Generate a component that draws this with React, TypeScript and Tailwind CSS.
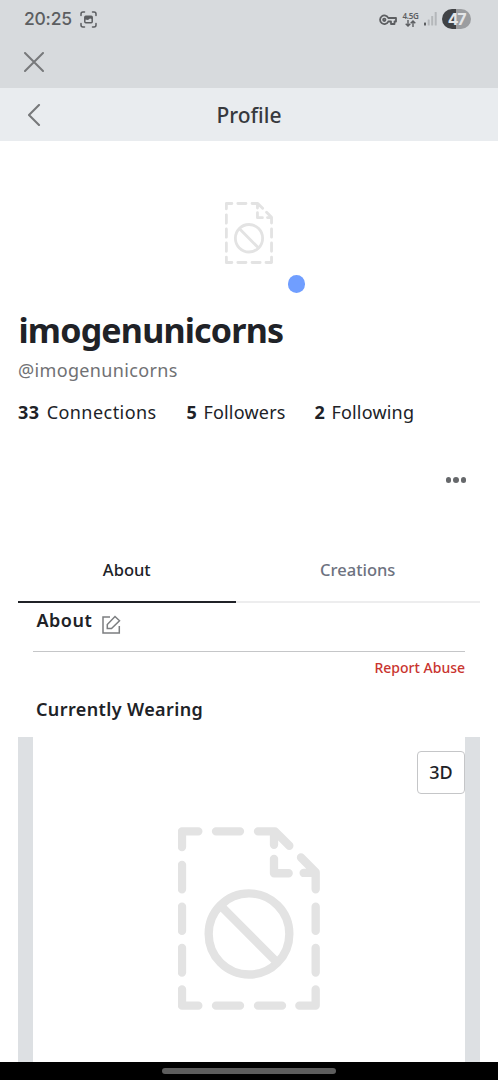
import React from "react";

function MissingImage({ className }: { className: string }) {
  return (
    <svg className={className} viewBox="54 52 426 546" preserveAspectRatio="none" fill="none" stroke="#e3e3e3" strokeWidth="25" strokeLinecap="round" strokeLinejoin="round">
      <path d="M66 112V65H115M168 65H240M294 65H345L388 108M342 67V105M423 143L467 187V238M465 189H431M342 147V190H386M66 165V238M66 290V362M66 413V486M66 537V585H115M168 585H240M294 585H366M418 585H467V537M467 290V362M467 413V486" />
      <circle cx="267" cy="371" r="121" />
      <path d="M185 290L350 455" />
    </svg>
  );
}

function StatusBar() {
  return (
    <div className="flex h-[38px] items-center justify-between pr-[27px] pl-6 text-[#5c5e61]">
      <div className="flex items-center gap-[8px]">
        <span className="font-[Inter] text-[17.5px] leading-[38px] font-medium tracking-[-0.25px]">20:25</span>
        <svg className="h-[17px] w-[17px]" viewBox="0 0 17 17" fill="none" stroke="currentColor" strokeWidth="1.5" strokeLinecap="round">
          <path d="M1 4.5V3Q1 1 3 1H4.5M12.500 1H14Q16 1 16 3V4.500M16 12.500V14Q16 16 14 16H12.500M4.500 16H3Q1 16 1 14V12.500" />
          <rect x="4.800" y="5.200" width="7.400" height="6.600" rx="1" />
          <path d="M5 5.500H12V8L10 7.500L8 9L5 8.500Z" fill="currentColor" stroke="none" />
        </svg>
      </div>
      <div className="flex items-center">
        <svg className="mt-[1px] h-[12px] w-[18px]" viewBox="0 0 18 12" fill="none" stroke="currentColor" strokeWidth="1.800" strokeLinejoin="round">
          <path d="M9.300 4H17V7.500H15.500V10H12V7.500H9.300A4.300 4.300 0 1 1 9.300 4Z" />
          <circle cx="5.300" cy="5.800" r="1.200" />
        </svg>
        <div className="ml-[5px] flex w-[17px] flex-col items-center">
          <span className="font-['Noto_Sans'] text-[8px] leading-[7px] font-semibold tracking-[-0.3px]">4.5G</span>
          <svg className="mt-[1px] h-[7px] w-[11px]" viewBox="0 0 11 7" fill="none" stroke="currentColor" strokeWidth="1.400">
            <path d="M3 0V6M.7 3.800L3 6L5.300 3.800M8 7V1M5.700 3.200L8 1L10.300 3.200" />
          </svg>
        </div>
        <svg className="ml-[5px] h-[14px] w-[13px]" viewBox="0 0 13 14">
          <rect x="0" y="10.500" width="2" height="3" rx=".5" fill="#5c5e61" />
          <g fill="#b4b7ba">
            <rect x="3.700" y="7.500" width="2" height="6" rx=".5" />
            <rect x="7.200" y="4" width="2" height="9.500" rx=".5" />
            <rect x="10.700" y="0" width="2" height="13.500" rx=".5" />
          </g>
        </svg>
        <div className="ml-[5px] flex h-[20px] w-[29px] items-center justify-center rounded-full bg-linear-to-r from-[#404245] from-47% to-[#9b9da0] to-47%">
          <span className="font-[Inter] text-[16px] leading-[20px] font-bold tracking-[-1.2px] text-[#e3e5e7]">47</span>
        </div>
      </div>
    </div>
  );
}

export default function App() {
  return (
    <div className="flex h-[1080px] w-[498px] flex-col overflow-hidden bg-white font-['Noto_Sans',sans-serif] text-[#202227]">
      <header className="h-[88px] shrink-0 bg-[#d7dadd]">
        <StatusBar />
        <div className="flex h-[48px] items-center pl-6">
          <svg className="h-[20px] w-[20px]" viewBox="0 0 20 20" fill="none" stroke="#77797b" strokeWidth="2" strokeLinecap="round">
            <path d="M1 1L19 19M19 1L1 19" />
          </svg>
        </div>
      </header>

      <nav className="grid h-[53px] shrink-0 grid-cols-[1fr_auto_1fr] items-center bg-[#e9ecef] px-[28px]">
        <svg className="h-[22px] w-[13px]" viewBox="0 0 13 22" fill="none" stroke="#77797b" strokeWidth="2.100" strokeLinecap="round" strokeLinejoin="round">
          <path d="M11 1L1 11L11 21" />
        </svg>
        <h1 className="pt-[1px] text-[21px] leading-[53px] font-medium text-[#37393d]">Profile</h1>
      </nav>

      <section className="flex h-[462px] shrink-0 flex-col px-[18px]">
        <div className="relative mx-auto mt-[61px] h-[62px] w-[48px]">
          <MissingImage className="h-[62px] w-[48px]" />
          <span className="absolute top-[73px] left-[62.500px] h-[17.500px] w-[17.500px] rounded-full bg-[#709eff]" />
        </div>
        <h2 className="mt-[46px] ml-[0.500px] text-[34px] leading-[40px] font-bold tracking-[-0.8px]">imogenunicorns</h2>
        <p className="mt-[8px] text-[18px] leading-[24px] tracking-[0.35px] text-[#707174]">@imogenunicorns</p>
        <div className="mt-[18px] flex text-[18px] leading-[24px]">
          <span className="w-[168.500px] tracking-[0.45px]"><b className="mr-[2px] font-bold">33</b> Connections</span>
          <span className="w-[128px] tracking-[0.2px]"><b className="mr-[1.500px] font-bold">5</b> Followers</span>
          <span className="tracking-[0.2px]"><b className="mr-[1.500px] font-bold">2</b> Following</span>
        </div>
        <button className="mt-[46px] mr-[14px] flex h-[20px] items-center gap-[2px] self-end" aria-label="More">
          <span className="h-[5.500px] w-[5.500px] rounded-full bg-[#66686b]" />
          <span className="h-[5.500px] w-[5.500px] rounded-full bg-[#66686b]" />
          <span className="h-[5.500px] w-[5.500px] rounded-full bg-[#66686b]" />
        </button>
        <div className="mt-auto grid h-[65px] grid-cols-[217.500px_1fr] text-center text-[16.5px] leading-[63px] font-medium">
          <button className="border-b-2 border-[#202227]">About</button>
          <button className="border-b-2 border-[#ededee] text-[#6d7280]">Creations</button>
        </div>
      </section>

      <section className="flex min-h-0 flex-1 flex-col">
        <div className="mx-[33px] flex h-[49px] shrink-0 gap-[9.500px] border-b border-[#c5c6c8] pl-[3.500px]">
          <h3 className="text-[18px] leading-[35px] font-semibold tracking-[0.5px]">About</h3>
          <svg className="mt-[12px] h-[19px] w-[19px]" viewBox="0 0 19 19" fill="none" stroke="#7c7e80" strokeWidth="1.500">
            <path d="M8 2H1V18H17.300V11M5.300 13.500V9.500L13 1.500L17.500 5.700L9.500 13.500Z" />
          </svg>
        </div>
        <a className="mr-[33px] self-end text-[14px] leading-[32px] font-medium text-[#c9342f]">Report Abuse</a>
        <h3 className="mt-[7px] ml-9 text-[18px] leading-[36px] font-semibold tracking-[0.38px]">Currently Wearing</h3>
        <div className="mx-[18px] mt-[10px] flex min-h-0 flex-1 border-x-[15px] border-[#dde0e3]">
          <div className="relative flex flex-1 justify-center pt-[90px]">
            <MissingImage className="h-[183px] w-[142px]" />
            <button className="absolute top-[14px] right-0 h-[43px] w-[48px] rounded-[4px] border border-[#c5c6c8] bg-white text-[18px] font-medium">3D</button>
          </div>
        </div>
      </section>

      <footer className="flex h-[18px] shrink-0 justify-center bg-black pt-[6px]">
        <div className="h-[6px] w-[174px] rounded-full bg-[#5d5d5d]" />
      </footer>
    </div>
  );
}
